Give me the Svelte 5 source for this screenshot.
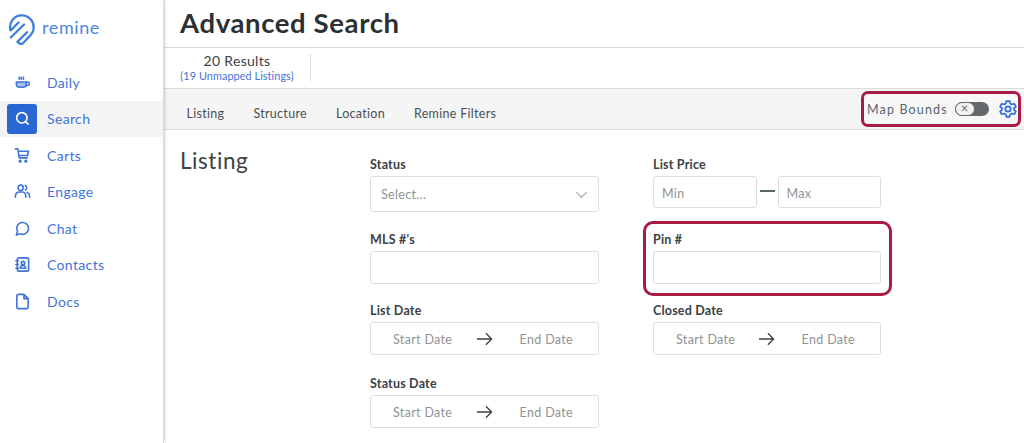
<script>
  const nav = ['Daily', 'Search', 'Carts', 'Engage', 'Chat', 'Contacts', 'Docs'];
  const tabs = ['Listing', 'Structure', 'Location', 'Remine Filters'];
</script>

{#snippet icon(name)}
  <svg class="ico" viewBox="0 0 18 18" fill="none" stroke="currentColor" stroke-width="1.7" stroke-linecap="round" stroke-linejoin="round">
    {#if name === 'Daily'}
      <path d="M2.500 8.500h10.500v2a3.500 3.500 0 0 1-3.500 3.500h-3.500a3.500 3.500 0 0 1-3.500-3.500z" fill="currentColor" fill-opacity=".45"/>
      <path d="M13 8.500h1.500a1.500 1.500 0 0 1 0 3.500h-2M5.500 3.500v2M7.700 3.500v2M10 3.500v2"/>
    {:else if name === 'Search'}
      <circle cx="8.300" cy="8.300" r="5.500"/><path d="M12.300 12.300l2.700 2.700"/>
    {:else if name === 'Carts'}
      <path d="M1.500 2h2.500l1.500 9.500h8.500M4.300 4.500h11l-1 4.500H5"/>
      <circle cx="6.500" cy="15" r=".9" fill="currentColor"/><circle cx="12.500" cy="15" r=".9" fill="currentColor"/>
    {:else if name === 'Engage'}
      <circle cx="7" cy="5" r="2.800"/><path d="M1.500 15v-1.500a4 4 0 0 1 4-4h3a4 4 0 0 1 4 4V15M12 2.500a2.800 2.800 0 0 1 0 5M14 10a4 4 0 0 1 2.500 3.500V15"/>
    {:else if name === 'Chat'}
      <path d="M2.500 16l1.200-4a6.300 6.300 0 1 1 2.800 2.600z"/>
    {:else if name === 'Contacts'}
      <rect x="3.500" y="2" width="12" height="14" rx="1.500"/><circle cx="9.500" cy="7.500" r="1.800"/><path d="M6.500 13a3 3 0 0 1 6 0zM2 5h2.500M2 9h2.500M2 13h2.500"/>
    {:else}
      <path d="M4.500 1.500h6l4.500 4.500v9a1.500 1.500 0 0 1-1.500 1.500h-9A1.500 1.500 0 0 1 3 15V3a1.500 1.500 0 0 1 1.500-1.500zM10.500 1.500v4.500H15"/>
    {/if}
  </svg>
{/snippet}

{#snippet dates()}
  <div class="box dates">
    <span>Start Date</span>
    <svg class="arrow" viewBox="0 0 18 14" fill="none" stroke="#3c4144" stroke-width="1.400"><path d="M1 7h15.500M10.500 1l6 6-6 6"/></svg>
    <span>End Date</span>
  </div>
{/snippet}

<div class="page">
  <aside class="side">
    <div class="logo">
      <svg viewBox="0 0 27 31" class="mark" fill="none" stroke="#3f7fdc" stroke-width="2.300" stroke-linecap="round" stroke-linejoin="round">
        <path d="M10.500 8.500L2.600 16.500C.3 9 6 1.300 13.500 1.300c7.500 0 12.300 6 12.200 12.200 0 3-1.200 5.500-3 7.500l-7.500 8c-1.600 1.500-3 1.300-4.200.2l-1.500-1.400 9.500-9.500"/>
        <path d="M2.800 23.500L16 10.500"/>
      </svg>
      <span>remine</span>
    </div>
    <nav>
      {#each nav as n}
        <div class="item" class:on={n === 'Search'}>
          <span class="ibox">{@render icon(n)}</span>
          <span>{n}</span>
        </div>
      {/each}
    </nav>
  </aside>

  <main>
    <h1>Advanced Search</h1>
    <div class="results">
      <div class="count">
        <div class="n">20 Results</div>
        <div class="un">(19 Unmapped Listings)</div>
      </div>
    </div>
    <div class="tabs">
      {#each tabs as t}<span>{t}</span>{/each}
      <div class="bounds">
        <span class="mb">Map Bounds</span>
        <span class="toggle"><span class="knob">×</span></span>
        <svg class="gear" viewBox="0 0 24 24" fill="none" stroke="#2a6bd6" stroke-width="2" stroke-linejoin="round">
          <circle cx="12" cy="12" r="3.200"/>
          <path d="M10 2.500h4l.6 3 2 1.100 2.900-1 2 3.500-2.300 2v1.800l2.300 2-2 3.500-2.900-1-2 1.100-.6 3h-4l-.6-3-2-1.100-2.900 1-2-3.500 2.300-2v-1.800l-2.300-2 2-3.500 2.900 1 2-1.100z"/>
        </svg>
      </div>
    </div>

    <section class="body">
      <h2>Listing</h2>
      <div class="form">
        <div class="field f1">
          <label>Status</label>
          <div class="box select">
            <span>Select...</span>
            <svg viewBox="0 0 14 8" fill="none" stroke="#b4b8ba" stroke-width="1.500"><path d="M1.500 1l5.500 5.500L12.500 1"/></svg>
          </div>
        </div>
        <div class="field f1">
          <label>List Price</label>
          <div class="range">
            <div class="box price">Min</div>
            <span class="dash"></span>
            <div class="box price">Max</div>
          </div>
        </div>
        <div class="field f2">
          <label>MLS #'s</label>
          <div class="box tall"></div>
        </div>
        <div class="field f2 pin">
          <label>Pin #</label>
          <div class="box tall"></div>
        </div>
        <div class="field f3">
          <label>List Date</label>
          {@render dates()}
        </div>
        <div class="field f3">
          <label>Closed Date</label>
          {@render dates()}
        </div>
        <div class="field f4">
          <label>Status Date</label>
          {@render dates()}
        </div>
      </div>
    </section>
  </main>
</div>

<style>
  :global(body) { margin: 0; background: #fff; }
  .page {
    display: flex; width: 1024px; height: 443px; overflow: hidden;
    font-family: Lato, "Open Sans", sans-serif; color: #3c4144;
  }
  .side {
    width: 164px; flex: none; box-sizing: border-box; border-right: 1px solid #d8d8d8;
    box-shadow: 1px 0 3px rgba(0,0,0,.18); position: relative; z-index: 1; background: #fff;
    color: #3f74d8;
  }
  .logo { display: flex; align-items: center; gap: 7px; padding: 9px 0 0 8px; height: 35px; font-size: 18px; letter-spacing: .6px; color: #4c87de; }
  .mark { width: 27px; height: 31px; margin-top: 5px; }
  nav { margin-top: 20px; display: flex; flex-direction: column; }
  .item { display: flex; align-items: center; height: 36.500px; font-size: 14px; letter-spacing: .35px; gap: 10px; padding-left: 7px; }
  .item.on { background: #f4f4f4; }
  .ibox { width: 30px; height: 30px; display: flex; align-items: center; justify-content: center; border-radius: 3px; }
  .on .ibox { background: #2a67d5; color: #fff; }
  .ico { width: 17px; height: 17px; }
  main { flex: 1; min-width: 0; }
  h1 {
    margin: 0; box-sizing: border-box; padding: 5px 0 0 16px; font-size: 27.500px; line-height: 36px;
    font-weight: 700; letter-spacing: .62px; color: #2b3133; border-bottom: 1px solid #d9d9d9; height: 48px;
  }
  .results { height: 40px; box-sizing: border-box; padding: 6px 0 0 15px; }
  .count { width: 131px; height: 27px; border-right: 1px solid #d9d9d9; text-align: center; }
  .n { font-size: 14px; line-height: 13px; letter-spacing: .3px; padding-right: 15px; }
  .un { font-size: 10.800px; line-height: 14px; color: #3f74d8; padding-right: 15px; letter-spacing: .1px; white-space: nowrap; margin-top: 2px; }
  .tabs {
    height: 42px; box-sizing: border-box; background: #f5f5f5; border-top: 1px solid #dcdcdc; border-bottom: 1px solid #dcdcdc;
    display: flex; align-items: center; padding: 9px 3px 0 22.500px; gap: 29px; font-size: 12.500px; letter-spacing: .3px; color: #4a4f52;
  }
  .bounds {
    margin-left: auto; display: flex; align-items: center; box-sizing: border-box; width: 160px; height: 36px; flex: none;
    margin-top: -9px; border: 3px solid #a81c44; border-radius: 7px; padding: 0 0 0 3px; background: #f7f7f7;
  }
  .mb { font-size: 12.500px; letter-spacing: 1.150px; color: #56686c; white-space: nowrap; }
  .toggle { width: 34px; height: 14px; background: #66696c; border-radius: 7px; margin-left: 7px; display: flex; flex: none; }
  .knob {
    width: 20px; height: 14px; box-sizing: border-box; background: #f2f2f2; border: 1.500px solid #66696c; border-radius: 7px;
    font-size: 13px; line-height: 10px; text-align: center; color: #66696c;
  }
  .gear { width: 20px; height: 20px; margin-left: 9px; flex: none; }
  .body { display: flex; padding: 0 0 0 16px; }
  h2 { margin: 17px 0 0; width: 190px; flex: none; font-weight: 400; font-size: 22.500px; line-height: 28px; letter-spacing: .55px; color: #3c4144; }
  .form { display: grid; grid-template-columns: 229px 228px; column-gap: 54px; padding-top: 27px; align-content: start; }
  .field { display: flex; flex-direction: column; }
  .f1 { height: 75px; }
  .f2 { height: 71px; }
  .f3 { height: 73px; }
  label { font-size: 12.500px; line-height: 15px; font-weight: 700; letter-spacing: .2px; color: #3c4144; margin-bottom: 4px; }
  .box {
    box-sizing: border-box; border: 1px solid #dedede; border-radius: 3px; background: #fff;
    color: #8f9396; font-size: 12.500px; letter-spacing: .33px; display: flex; align-items: center;
  }
  .select { height: 36px; justify-content: space-between; padding: 1px 10px 0; }
  .select svg { width: 13px; height: 8px; }
  .range { display: flex; align-items: center; }
  .price { flex: 1; height: 32px; padding: 2px 0 0 8px; }
  .dash { width: 15px; height: 2px; background: #56686c; margin: 0 3px 2px; }
  .tall { height: 33px; }
  .pin { box-sizing: border-box; margin: -11px -10.500px 0 -10px; height: 75px; padding: 8px 7.500px 0 7px; border: 3px solid #a81c44; border-radius: 10px; }
  .dates { height: 33px; justify-content: space-between; padding: 2px 25px 0 22px; }
  .arrow { width: 17px; height: 14px; margin: -1px 0 0 -3px; }
</style>
